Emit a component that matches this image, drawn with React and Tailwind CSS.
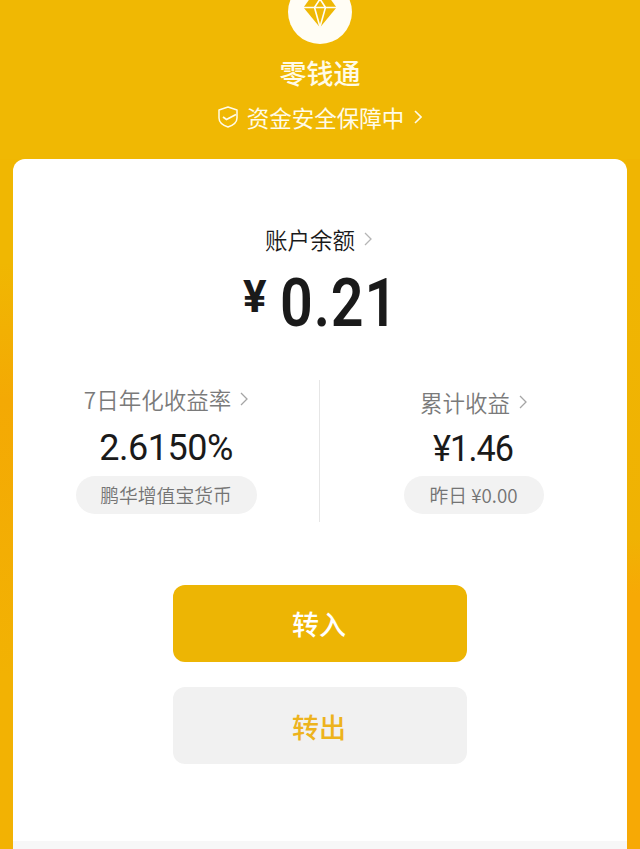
function Diamond() {
  return (
    <svg className="h-9 w-9" viewBox="0 0 36 36" fill="none">
      <path d="M9 -3H27L34.500 7.500L18 27.500L1.500 7.500Z" fill="#efb804" />
      <path d="M1 7.500H35M12.500 7.500L18 27L23.500 7.500L18 -1Z" stroke="#fffdf5" strokeWidth="1.6" />
    </svg>
  )
}

function Shield() {
  return (
    <svg className="h-[22px] w-5" viewBox="0 0 20 22" fill="none" stroke="#fffbe8" strokeWidth="1.500">
      <path d="M10 1L19 4V12C19 16.500 14.500 19.500 10 21C5.500 19.500 1 16.500 1 12V4Z" strokeLinejoin="round" />
      <path d="M5 11L8.500 13.500L18 8.500" strokeWidth="1.8" />
    </svg>
  )
}

function Chevron({ className }) {
  return (
    <svg className={`h-[14px] w-2 ${className}`} viewBox="0 0 8 14" fill="none" stroke="currentColor">
      <path d="M1 1L7 7L1 13" />
    </svg>
  )
}

function Label({ className, children }) {
  return (
    <div className={`flex items-center text-[#7a7a7a] ${className}`}>
      <span className="text-[22.500px] leading-8 font-[350]">{children}</span>
      <Chevron className="ml-[9px] stroke-[1.3] text-[#a5a5a5]" />
    </div>
  )
}

function Pill({ className, children }) {
  return (
    <div className={`flex h-[38px] items-center justify-center rounded-full bg-[#f2f2f2] text-[18.800px] font-[350] text-[#747474] ${className}`}>
      {children}
    </div>
  )
}

export default function App() {
  return (
    <div className="flex h-[849px] w-[640px] flex-col overflow-hidden bg-[#f0b803] font-['Noto_Sans_CJK_SC',sans-serif] whitespace-nowrap">
      <header className="flex h-[159px] shrink-0 flex-col items-center text-[#fffbe8]">
        <div className="-mt-5 flex h-16 w-16 shrink-0 justify-center rounded-full bg-[#fffdf5] pt-5">
          <Diamond />
        </div>
        <h1 className="mt-[9px] text-[27px] leading-10 font-medium">零钱通</h1>
        <div className="mt-2 flex items-center">
          <Shield />
          <span className="ml-[9px] text-[22.500px] leading-8">资金安全保障中</span>
          <Chevron className="ml-[10px] stroke-[1.6]" />
        </div>
      </header>

      <div className="flex grow">
        <div className="w-[13px] bg-linear-to-b from-[#f0b702] from-15% via-[#f4a904] via-35% to-[#f2b203] to-75%" />
        <main className="flex w-[614px] flex-col items-center bg-linear-to-b from-[#f0b702] to-[#f4aa04] to-10%">
          <div className="flex w-full grow flex-col items-center rounded-t-[12px] bg-white">
            <div className="mt-[64px] mr-[3px] flex items-center text-[#1a1a1a]">
              <span className="text-[22.500px] leading-8 font-[350]">账户余额</span>
              <Chevron className="ml-[9px] stroke-[1.3] text-[#b5b5b5]" />
            </div>
            <div className="mt-[5px] mr-1 flex h-[80px] w-[150px] items-start font-['Roboto',sans-serif] text-[#1a1a1a]">
              <span className="mt-[7px] w-[37px] shrink-0 text-[44px] leading-[60px] font-bold">¥</span>
              <span className="mt-1 origin-left scale-x-[0.87] text-[66px] leading-[80px] font-semibold tracking-[1px]">0.21</span>
            </div>

            <div className="mt-10 flex w-full">
              <section className="flex w-[306px] flex-col items-center">
                <Label className="mt-[3px]">7日年化收益率</Label>
                <span className="mt-[9px] font-['Roboto',sans-serif] text-[36px] leading-[48px] tracking-[-0.5px] text-[#1a1a1a]">2.6150%</span>
                <Pill className="mt-1 w-[181px]">鹏华增值宝货币</Pill>
              </section>
              <div className="h-[142px] w-px bg-[#e6e6e6]" />
              <section className="flex w-[307px] flex-col items-center">
                <Label className="mt-[6px]">累计收益</Label>
                <span className="mt-[7px] scale-x-95 font-['Roboto',sans-serif] text-[36px] leading-[48px] tracking-[-1px] text-[#1a1a1a]">¥1.46</span>
                <Pill className="mt-[3px] w-[140px]">昨日 ¥0.00</Pill>
              </section>
            </div>

            <button className="mt-[63px] h-[77px] w-[294px] shrink-0 rounded-xl bg-[#edb504] pt-0.5 pr-0.5 text-[27px] font-medium text-white">转入</button>
            <button className="mt-[25px] h-[77px] w-[294px] shrink-0 rounded-xl bg-[#f1f1f1] pt-[3px] pr-0.5 text-[27px] font-medium text-[#edb31d]">转出</button>
            <div className="mt-auto h-2 w-full bg-[#f7f7f7]" />
          </div>
        </main>
        <div className="w-[13px] bg-linear-to-b from-[#f0b502] from-15% via-[#f0b203] via-55% to-[#f7a905] to-63%" />
      </div>
    </div>
  )
}
